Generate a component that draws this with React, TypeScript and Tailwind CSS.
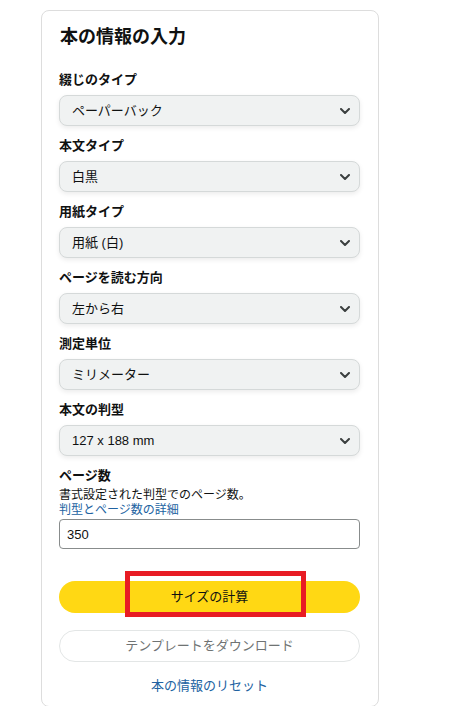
import React from 'react';

const font = { fontFamily: '"Liberation Sans", Arial, "Noto Sans CJK JP", sans-serif' };

const fields = [
    { label: '綴じのタイプ', value: 'ペーパーバック' },
    { label: '本文タイプ', value: '白黒' },
    { label: '用紙タイプ', value: '用紙 (白)' },
    { label: 'ページを読む方向', value: '左から右' },
    { label: '測定単位', value: 'ミリメーター' },
    { label: '本文の判型', value: '127 x 188 mm' },
];

function Chevron() {
    return (
        <svg width="10" height="6" viewBox="0 0 10 6" className="absolute right-[10px] top-1/2 -translate-y-1/2 pointer-events-none">
            <path d="M1 1l4 4 4-4" fill="none" stroke="#3b3f3f" strokeWidth="2" strokeLinecap="round" strokeLinejoin="round" />
        </svg>
    );
}

function SelectField({ label, value }: { label: string; value: string }) {
    return (
        <div className="flex flex-col">
            <label className="text-[13px] leading-[19px] font-bold text-[#0f1111]">{label}</label>
            <div className="relative mt-[6px]">
                <select
                    defaultValue={value}
                    className="w-full h-[31px] appearance-none bg-[#f0f2f2] border border-[#d5d9d9] rounded-[8px] pl-[12px] pr-8 text-[13px] text-[#0f1111] shadow-[0_2px_5px_rgba(15,17,17,0.08)] focus:outline-none"
                    style={font}
                >
                    <option>{value}</option>
                </select>
                <Chevron />
            </div>
        </div>
    );
}

export default function App() {
    return (
        <div className="min-h-screen bg-white pt-[10px] pl-[41px]" style={font}>
            <div className="w-[338px] border border-[#dddddd] rounded-[8px] pl-[17px] pr-[18px] pt-[14px] pb-[9px]">
                <h1 className="text-[18px] leading-[24px] font-bold text-[#0f1111] pl-[1px]">本の情報の入力</h1>

                <div className="mt-[21px] flex flex-col gap-[10px]">
                    {fields.map((f) => (
                        <SelectField key={f.label} label={f.label} value={f.value} />
                    ))}

                    <div className="flex flex-col">
                        <label className="text-[13px] leading-[19px] font-bold text-[#0f1111]">ページ数</label>
                        <p className="text-[12px] leading-[15px] text-[#0f1111] mt-[3px]">書式設定された判型でのページ数。</p>
                        <a href="#" className="text-[12px] leading-[15px] text-[#2162a1]">判型とページ数の詳細</a>
                        <input
                            defaultValue="350"
                            className="mt-[1px] h-[30px] w-full border border-[#888c8c] rounded-[4px] px-[7px] text-[13px] text-[#0f1111] focus:outline-none"
                            style={font}
                        />
                    </div>
                </div>

                <div className="relative mt-[32px]">
                    <button className="w-full h-[32px] rounded-full bg-[#ffd814] text-[13px] text-[#0f1111]" style={font}>
                        サイズの計算
                    </button>
                    <div className="absolute left-[66px] top-[-10px] w-[181px] h-[46px] border-[5px] border-[#e81c24] pointer-events-none" />
                </div>

                <button className="mt-[17px] w-full h-[32px] rounded-full bg-white border border-[#e3e6e6] text-[13px] text-[#6f7373]" style={font}>
                    テンプレートをダウンロード
                </button>

                <div className="mt-[11px] text-center">
                    <a href="#" className="text-[13px] leading-[19px] text-[#2162a1]">本の情報のリセット</a>
                </div>
            </div>
        </div>
    );
}
